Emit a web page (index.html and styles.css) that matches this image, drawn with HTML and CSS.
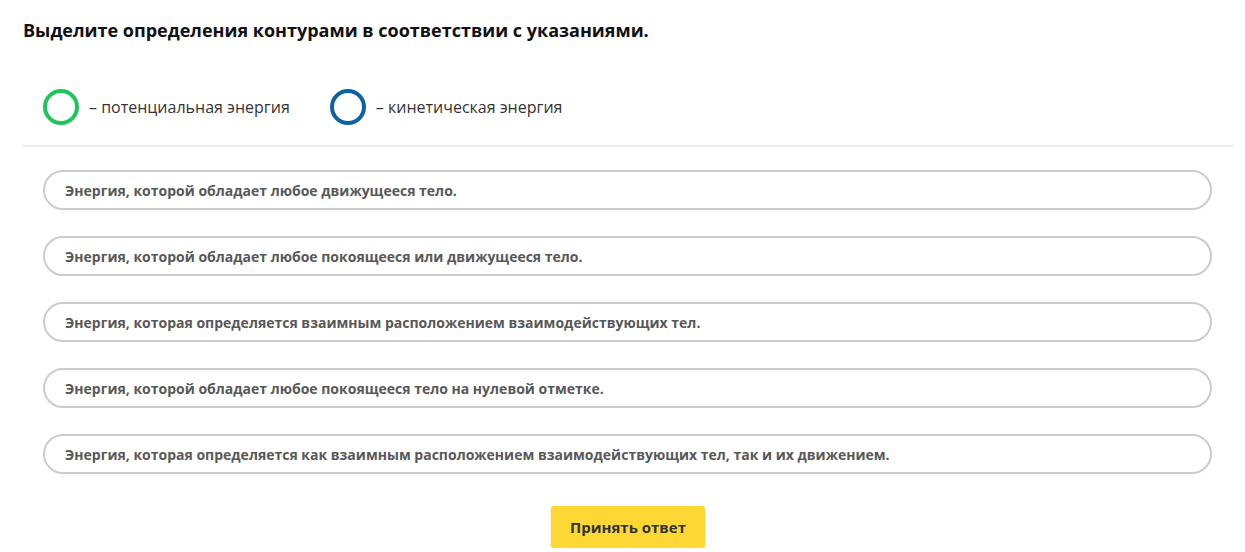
FILE: index.html
```html
<!DOCTYPE html>
<html lang="ru">
<head>
    <meta charset="UTF-8">
    <meta name="viewport" content="width=device-width, initial-scale=1.0">
    <title>Энергия</title>
    <link rel="stylesheet" href="styles.css">
</head>
<body>
    <div class="task">
        <h1 class="task-title">Выделите определения контурами в соответствии с указаниями.</h1>

        <section class="legend">
            <div class="legend-item">
                <span class="ring ring-green"></span>
                <span class="legend-text">– потенциальная энергия</span>
            </div>
            <div class="legend-item">
                <span class="ring ring-blue"></span>
                <span class="legend-text">– кинетическая энергия</span>
            </div>
        </section>

        <section class="options">
            <div class="option">Энергия, которой обладает любое движущееся тело.</div>
            <div class="option">Энергия, которой обладает любое покоящееся или движущееся тело.</div>
            <div class="option">Энергия, которая определяется взаимным расположением взаимодействующих тел.</div>
            <div class="option">Энергия, которой обладает любое покоящееся тело на нулевой отметке.</div>
            <div class="option">Энергия, которая определяется как взаимным расположением взаимодействующих тел, так и их движением.</div>
        </section>

        <div class="actions">
            <button class="submit">Принять ответ</button>
        </div>
    </div>
</body>
</html>
```

FILE: styles.css
```css
* {
    margin: 0;
    padding: 0;
    box-sizing: border-box;
}

body {
    background-color: #fff;
    font-family: 'Open Sans', 'Noto Sans', sans-serif;
    color: #222;
}

.task {
    width: 1210px;
    margin-left: 23px;
    padding-top: 18px;
}

.task-title {
    font-size: 18px;
    font-weight: 700;
    color: #111;
    line-height: 24px;
}

.legend {
    display: flex;
    gap: 40px;
    padding: 0 20px;
    margin-top: 47px;
    padding-bottom: 20px;
    border-bottom: 2px solid #eee;
}

.legend-item {
    display: flex;
    align-items: center;
    gap: 10px;
}

.ring {
    width: 36px;
    height: 36px;
    border-radius: 50%;
    border: 4px solid;
}

.ring-green {
    border-color: #1fc45c;
}

.ring-blue {
    border-color: #0d62a4;
}

.legend-text {
    font-size: 16px;
    color: #333;
}

.options {
    display: flex;
    flex-direction: column;
    gap: 26px;
    padding: 0 21px 0 20px;
    margin-top: 23px;
}

.option {
    height: 40px;
    border: 2px solid #ccc;
    border-radius: 20px;
    padding: 0 20px;
    display: flex;
    align-items: center;
    font-size: 14px;
    font-weight: 700;
    color: #585858;
}

.actions {
    display: flex;
    justify-content: center;
    margin-top: 32px;
}

.submit {
    width: 154px;
    height: 42px;
    border: none;
    border-radius: 3px;
    background-color: #fdd835;
    box-shadow: 0 1px 3px rgba(0, 0, 0, 0.15);
    font-family: inherit;
    font-size: 15px;
    font-weight: 700;
    color: #333;
    cursor: pointer;
}
```
